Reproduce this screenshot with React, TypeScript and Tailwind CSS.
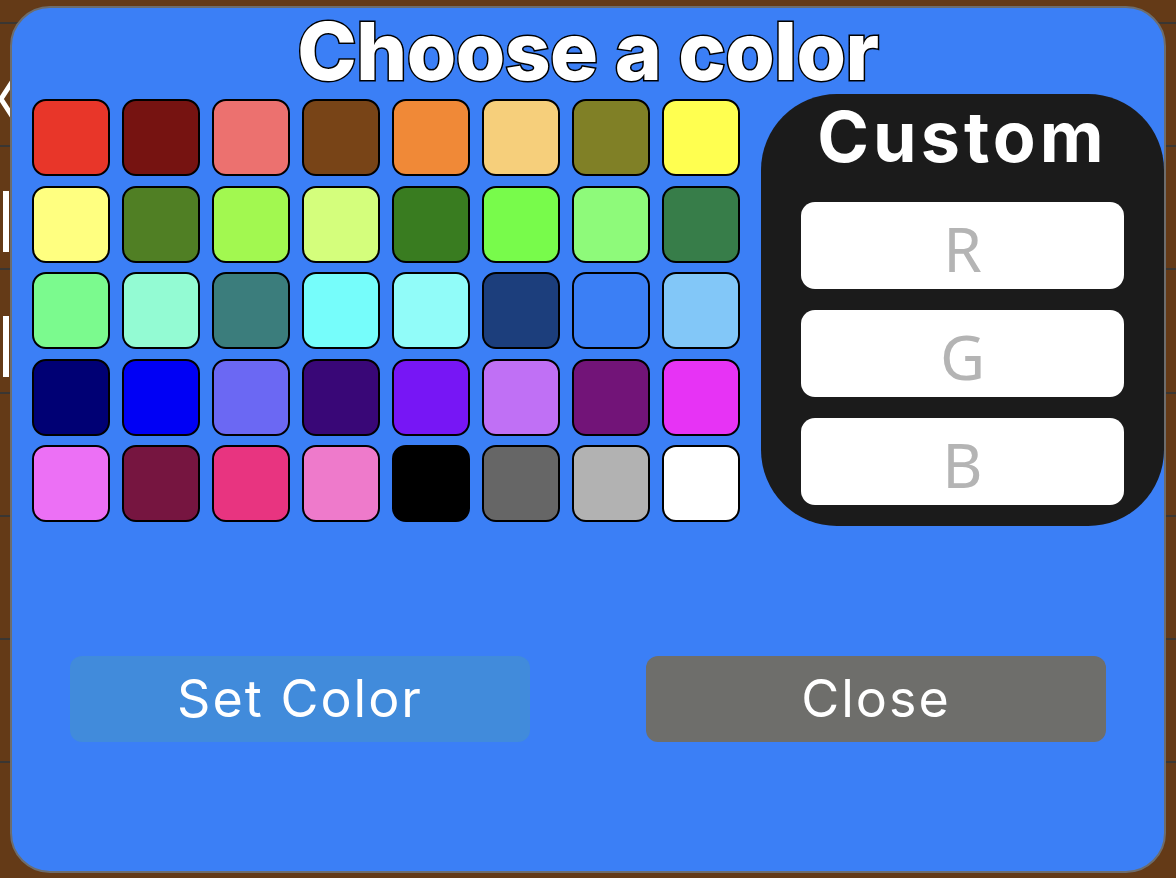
import React from 'react';

const swatches = [
  '#e83629', '#761311', '#ec716f', '#784417', '#f08937', '#f6cf7b', '#808026', '#ffff50',
  '#ffff80', '#507f24', '#a2f850', '#d4fe7c', '#397c20', '#78fb4b', '#8efa7a', '#377d49',
  '#7bfa8e', '#93fbd3', '#3b7d7c', '#76fdfb', '#91fcf9', '#1c3e7c', '#3b7ff5', '#82c7f8',
  '#000074', '#0000f5', '#6b68f3', '#390777', '#7716f5', '#c070f5', '#721478', '#e733f5',
  '#ec70f5', '#761540', '#e83480', '#ee7acb', '#000000', '#666666', '#b2b2b2', '#ffffff',
];

// background list rows peeking out behind the modal
function BackgroundList() {
  return (
    <div className="flex flex-col w-full h-full bg-[#643a17]">
      <div className="h-[24px] shrink-0 border-b-2 border-[#3a3632]" />
      <div className="h-[123px] shrink-0 border-b-2 border-[#3a3632] pt-[54px]">
        <svg width="14" height="42" viewBox="0 0 14 42">
          <polyline points="14,1 1,21 14,41" fill="none" stroke="#fff" strokeWidth="5" />
        </svg>
      </div>
      <div className="h-[123px] shrink-0 border-b-2 border-[#3a3632] pt-[44px] pl-[3px]">
        <div className="w-[6px] h-[61px] bg-white" />
      </div>
      <div className="h-[124px] shrink-0 border-b-2 border-[#3a3632] pt-[46px] pl-[3px]">
        <div className="w-[6px] h-[61px] bg-white" />
      </div>
      <div className="h-[123px] shrink-0 border-b-2 border-[#3a3632]" />
      <div className="h-[123px] shrink-0 border-b-2 border-[#3a3632]" />
      <div className="h-[123px] shrink-0 border-b-2 border-[#3a3632]" />
    </div>
  );
}

function ChannelInput({ label }: { label: string }) {
  return (
    <div className="h-[87px] rounded-[14px] bg-white flex items-center justify-center">
      <span className="font-['Noto_Sans',sans-serif] text-[62px] leading-none text-[#b4b4b4] pt-[4px]">
        {label}
      </span>
    </div>
  );
}

export default function App() {
  return (
    <div className="relative w-[1176px] h-[878px] overflow-hidden">
      <BackgroundList />

      {/* Colour picker modal */}
      <div className="absolute left-[10px] top-[6px] w-[1156px] h-[867px] rounded-[40px] border-2 border-[#6d6d6d] bg-[#3b7ff6] flex flex-col pt-[3px]">
        <h1 className="h-[80px] text-center font-['Inter',sans-serif] font-extrabold text-[80px] leading-[80px] tracking-[-0.5px] text-white [-webkit-text-stroke:3px_#000] [paint-order:stroke_fill]">
          Choose a color
        </h1>

        <div className="flex items-start mt-[3px] pl-[20px] gap-[21px]">
          <div className="grid grid-cols-[repeat(8,78px)] grid-rows-[repeat(5,77px)] gap-x-[12px] gap-y-[9.5px] mt-[5px]">
            {swatches.map((c, i) => (
              <button
                key={i}
                className="w-[78px] h-[77px] rounded-[14px] border-2 border-black"
                style={{ backgroundColor: c }}
              />
            ))}
          </div>

          <div className="w-[403px] h-[432px] rounded-[76px] bg-[#1b1b1b] flex flex-col px-[40px] pt-[8px]">
            <h2 className="h-[70px] text-center font-['Inter',sans-serif] font-bold text-[70px] leading-[70px] tracking-[4px] text-white">
              Custom
            </h2>
            <div className="flex flex-col gap-[21px] mt-[30px]">
              <ChannelInput label="R" />
              <ChannelInput label="G" />
              <ChannelInput label="B" />
            </div>
          </div>
        </div>

        <div className="flex justify-between px-[58px] mt-[130px]">
          <button className="w-[460px] h-[86px] rounded-[12px] bg-[#418bdb] flex items-center justify-center font-['Inter',sans-serif] text-[52px] tracking-[2px] text-white">
            Set Color
          </button>
          <button className="w-[460px] h-[86px] rounded-[12px] bg-[#6e6e6b] flex items-center justify-center font-['Inter',sans-serif] text-[52px] tracking-[2px] text-white">
            Close
          </button>
        </div>
      </div>
    </div>
  );
}
